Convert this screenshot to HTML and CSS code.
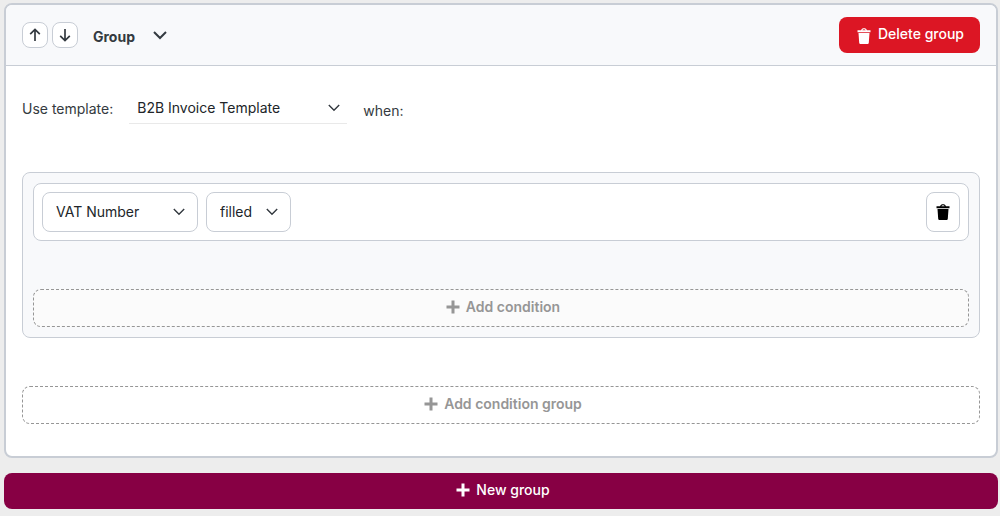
FILE: index.html
```html
<!DOCTYPE html>
<html lang="en">
<head>
  <meta charset="UTF-8">
  <meta name="viewport" content="width=device-width, initial-scale=1.0">
  <title>Template rules</title>
  <link rel="stylesheet" href="styles.css">
</head>
<body>
  <section class="group">
    <header class="group-header">
      <button type="button" class="move-button" aria-label="Move up">
        <svg width="12" height="14" viewBox="0 0 12 14"><path d="M6 13V1.5M1.2 6.2L6 1.4l4.8 4.8"/></svg>
      </button>
      <button type="button" class="move-button" aria-label="Move down">
        <svg width="12" height="14" viewBox="0 0 12 14"><path d="M6 1v11.5M1.2 7.8L6 12.6l4.8-4.8"/></svg>
      </button>
      <button type="button" class="group-toggle">
        Group
        <svg width="14" height="9" viewBox="0 0 14 9"><path d="M1 1l6 6 6-6"/></svg>
      </button>
      <button type="button" class="delete-button">
        <svg class="icon-trash" width="14" height="16" viewBox="0 0 14 16"><path d="M.5 2.2h3.6C4.6.9 5.500.3 7 .3s2.400.6 2.900 1.900h3.600v2H.5zM5.300 2.200h3.400C8.300 1.500 7.800 1.200 7 1.200s-1.300.3-1.700 1zM1.500 5.100h11l-.7 9.700q-.1 1.200-1.200 1.200H3.400q-1.100 0-1.200-1.200z"/></svg>
        Delete group
      </button>
    </header>

    <div class="group-body">
      <div class="template-row">
        <label for="template" class="template-label">Use template:</label>
        <select id="template" class="template-select">
          <option>B2B Invoice Template</option>
        </select>
        <span class="when">when:</span>
      </div>

      <div class="condition-group">
        <div class="condition">
          <select class="field-select" aria-label="Field">
            <option>VAT Number</option>
          </select>
          <select class="operator-select" aria-label="Operator">
            <option>filled</option>
          </select>
          <button type="button" class="remove-button" aria-label="Remove condition">
            <svg class="icon-trash" width="14" height="16" viewBox="0 0 14 16"><path d="M.5 2.2h3.6C4.6.9 5.500.3 7 .3s2.400.6 2.900 1.900h3.600v2H.5zM5.300 2.200h3.400C8.300 1.500 7.800 1.200 7 1.200s-1.300.3-1.700 1zM1.500 5.100h11l-.7 9.700q-.1 1.200-1.200 1.200H3.400q-1.100 0-1.200-1.200z"/></svg>
          </button>
        </div>
        <button type="button" class="add-button add-condition">
          <svg width="14" height="14" viewBox="0 0 14 14"><path d="M5.500 .5h3v5h5v3h-5v5h-3v-5h-5v-3h5z"/></svg>
          Add condition
        </button>
      </div>

      <button type="button" class="add-button">
        <svg width="14" height="14" viewBox="0 0 14 14"><path d="M5.500 .5h3v5h5v3h-5v5h-3v-5h-5v-3h5z"/></svg>
        Add condition group
      </button>
    </div>
  </section>

  <button type="button" class="new-group">
    <svg width="14" height="14" viewBox="0 0 14 14"><path d="M5.500 .5h3v5h5v3h-5v5h-3v-5h-5v-3h5z"/></svg>
    New group
  </button>
</body>
</html>
```
FILE: styles.css
```css
* {
  box-sizing: border-box;
}
body {
  margin: 0;
  padding: 3px 2px 7px 4px;
  background-color: #ededed;
  color: #343a40;
  font-family: Inter, "Liberation Sans", sans-serif;
  font-size: 14px;
  line-height: 20px;
}
button,
select {
  font: inherit;
  cursor: pointer;
}
button {
  display: flex;
  align-items: center;
  justify-content: center;
  margin: 0;
  border: none;
  border-radius: 8px;
}
button svg {
  fill: currentColor;
}

/* Group card */
.group {
  border: 2px solid #c8cdd5;
  border-radius: 8px;
  background-color: #fff;
  overflow: hidden;
}
.group-header {
  display: flex;
  align-items: center;
  gap: 4px;
  padding: 12px 16px;
  border-bottom: 1px solid #c8cdd5;
  background-color: #f8f9fb;
}
.move-button {
  width: 26px;
  height: 26px;
  padding: 0;
  border: 1px solid #c8cdd5;
  background-color: #fff;
  color: #343a40;
}
.move-button svg,
.group-toggle svg {
  fill: none;
  stroke: currentColor;
  stroke-width: 1.7;
}
.group-toggle {
  gap: 18px;
  padding: 4px 0 0;
  margin-left: 11px;
  background: none;
  color: #343a40;
  font-weight: 700;
}
.group-toggle svg {
  margin-bottom: 4px;
  stroke-width: 2;
}
.delete-button {
  gap: 7px;
  height: 36px;
  margin-left: auto;
  padding: 0 16px 2px 18px;
  background-color: #dc1624;
  color: #fff;
}
.delete-button svg {
  margin-top: 3px;
}
.delete-button,
.new-group {
  font-weight: 500;
}
.group-body {
  padding: 26px 16px 32px;
}

/* Template row */
.template-row {
  display: flex;
  align-items: center;
  gap: 16px;
  margin-bottom: 48px;
}
.template-label {
  padding-top: 2px;
}
.when {
  padding-top: 6px;
}
select {
  appearance: none;
  border: 1px solid #c8cdd5;
  border-radius: 8px;
  background: #fff url("data:image/svg+xml,%3Csvg xmlns='http://www.w3.org/2000/svg' width='12' height='8' viewBox='0 0 12 8'%3E%3Cpath d='M.8 1L6 6.2 11.2 1' fill='none' stroke='%23343a40' stroke-width='1.4'/%3E%3C/svg%3E") no-repeat right 12px center;
  color: #212529;
}
.template-select {
  width: 218px;
  height: 32px;
  padding: 0 24px 0 8px;
  border-width: 0 0 1px;
  border-color: #e9e9e9;
  border-radius: 0;
  background-position: right 7px center;
}

/* Conditions */
.condition-group {
  margin-bottom: 48px;
  padding: 10px;
  border: 1px solid #c8cdd5;
  border-radius: 8px;
  background-color: #f8f9fb;
}
.condition {
  display: flex;
  gap: 8px;
  margin-bottom: 48px;
  padding: 8px;
  border: 1px solid #c8cdd5;
  border-radius: 8px;
  background-color: #fff;
}
.field-select,
.operator-select {
  height: 40px;
  padding: 0 28px 0 13px;
}
.field-select {
  width: 156px;
}
.operator-select {
  width: 85px;
}
.remove-button {
  width: 34px;
  height: 40px;
  margin-left: auto;
  padding: 0;
  border: 1px solid #c8cdd5;
  background-color: #fff;
  color: #000;
}
.add-button,
.new-group {
  gap: 6px;
  width: 100%;
  padding: 0 0 2px 4px;
}
.add-button {
  height: 38px;
  border: 1px dashed #969696;
  background-color: #fff;
  color: #969696;
  font-weight: 600;
}
.add-condition {
  background-color: #fbfbfb;
}
.new-group {
  height: 36px;
  margin-top: 15px;
  background-color: #870044;
  color: #fff;
}
```
